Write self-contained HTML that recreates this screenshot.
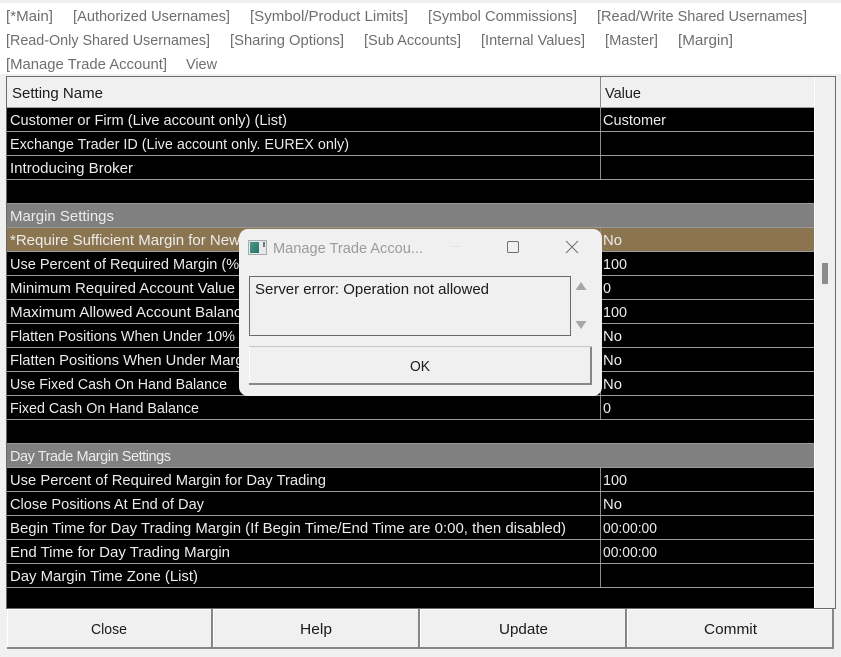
<!DOCTYPE html>
<html><head><meta charset="utf-8"><style>
html,body{margin:0;padding:0;background:#f0f0f0;width:841px;height:657px;overflow:hidden}
svg{display:block}
text{font-family:"Liberation Sans",sans-serif;font-size:14.5px;white-space:pre}
.t text{fill:#6e6e6e}
.r text{fill:#ececec}
.k text{fill:#1a1a1a}
</style></head><body>
<svg width="841" height="657" viewBox="0 0 841 657" xmlns="http://www.w3.org/2000/svg">
<rect width="841" height="657" fill="#f0f0f0"/>
<rect y="3" width="841" height="71" fill="#fff"/>
<g class="t">
<text x="6" y="21" textLength="47" lengthAdjust="spacingAndGlyphs">[*Main]</text>
<text x="73" y="21" textLength="157" lengthAdjust="spacingAndGlyphs">[Authorized Usernames]</text>
<text x="250" y="21" textLength="158" lengthAdjust="spacingAndGlyphs">[Symbol/Product Limits]</text>
<text x="428" y="21" textLength="149" lengthAdjust="spacingAndGlyphs">[Symbol Commissions]</text>
<text x="597" y="21" textLength="210" lengthAdjust="spacingAndGlyphs">[Read/Write Shared Usernames]</text>
<text x="6" y="45" textLength="204" lengthAdjust="spacingAndGlyphs">[Read-Only Shared Usernames]</text>
<text x="230" y="45" textLength="114" lengthAdjust="spacingAndGlyphs">[Sharing Options]</text>
<text x="364" y="45" textLength="97" lengthAdjust="spacingAndGlyphs">[Sub Accounts]</text>
<text x="481" y="45" textLength="104" lengthAdjust="spacingAndGlyphs">[Internal Values]</text>
<text x="605" y="45" textLength="53" lengthAdjust="spacingAndGlyphs">[Master]</text>
<text x="678" y="45" textLength="55" lengthAdjust="spacingAndGlyphs">[Margin]</text>
<text x="6" y="69" textLength="161" lengthAdjust="spacingAndGlyphs">[Manage Trade Account]</text>
<text x="186" y="69" textLength="31" lengthAdjust="spacingAndGlyphs">View</text>
</g>
<!-- table frame -->
<rect x="6.5" y="76.5" width="829" height="532" fill="#f0f0f0" stroke="#6b6b6b"/>
<rect x="814" y="77" width="1" height="531" fill="#fff"/>
<rect x="7" y="108" width="807" height="500" fill="#000"/>
<rect x="600" y="77" width="1" height="31" fill="#8a8a8a"/>
<rect x="7" y="107" width="807" height="1" fill="#a0a0a0"/>
<g class="k">
<text x="12" y="98" textLength="91" lengthAdjust="spacingAndGlyphs">Setting Name</text>
<text x="605" y="98" textLength="36" lengthAdjust="spacingAndGlyphs">Value</text>
</g>
<!-- special rows -->
<rect x="7" y="204" width="807" height="23" fill="#808080"/>
<rect x="7" y="228" width="807" height="23" fill="#8b7550"/>
<rect x="7" y="444" width="807" height="23" fill="#808080"/>
<!-- column separators -->
<g fill="#8a8a8a">
<rect x="600" y="108" width="1" height="72"/>
<rect x="600" y="228" width="1" height="192"/>
<rect x="600" y="468" width="1" height="120"/>
</g>
<!-- row lines -->
<g fill="#9a9a9a">
<rect x="7" y="131" width="807" height="1"/><rect x="7" y="155" width="807" height="1"/>
<rect x="7" y="179" width="807" height="1"/><rect x="7" y="203" width="807" height="1"/>
<rect x="7" y="227" width="807" height="1"/><rect x="7" y="251" width="807" height="1"/>
<rect x="7" y="275" width="807" height="1"/><rect x="7" y="299" width="807" height="1"/>
<rect x="7" y="323" width="807" height="1"/><rect x="7" y="347" width="807" height="1"/>
<rect x="7" y="371" width="807" height="1"/><rect x="7" y="395" width="807" height="1"/>
<rect x="7" y="419" width="807" height="1"/><rect x="7" y="443" width="807" height="1"/>
<rect x="7" y="467" width="807" height="1"/><rect x="7" y="491" width="807" height="1"/>
<rect x="7" y="515" width="807" height="1"/><rect x="7" y="539" width="807" height="1"/>
<rect x="7" y="563" width="807" height="1"/><rect x="7" y="587" width="807" height="1"/>
</g>
<g class="r">
<text x="10" y="125" textLength="277" lengthAdjust="spacingAndGlyphs">Customer or Firm (Live account only) (List)</text>
<text x="10" y="149" textLength="339" lengthAdjust="spacingAndGlyphs">Exchange Trader ID (Live account only. EUREX only)</text>
<text x="10" y="173" textLength="123" lengthAdjust="spacingAndGlyphs">Introducing Broker</text>
<text x="10" y="221" textLength="104" lengthAdjust="spacingAndGlyphs">Margin Settings</text>
<text x="10" y="245" textLength="295" lengthAdjust="spacingAndGlyphs">*Require Sufficient Margin for New Positions</text>
<text x="10" y="269" textLength="234" lengthAdjust="spacingAndGlyphs">Use Percent of Required Margin (%)</text>
<text x="10" y="293" textLength="225" lengthAdjust="spacingAndGlyphs">Minimum Required Account Value</text>
<text x="10" y="317" textLength="240" lengthAdjust="spacingAndGlyphs">Maximum Allowed Account Balance</text>
<text x="10" y="341" textLength="225" lengthAdjust="spacingAndGlyphs">Flatten Positions When Under 10%</text>
<text x="10" y="365" textLength="245" lengthAdjust="spacingAndGlyphs">Flatten Positions When Under Margin</text>
<text x="10" y="389" textLength="217" lengthAdjust="spacingAndGlyphs">Use Fixed Cash On Hand Balance</text>
<text x="10" y="413" textLength="189" lengthAdjust="spacingAndGlyphs">Fixed Cash On Hand Balance</text>
<text x="10" y="461" textLength="161" lengthAdjust="spacing">Day Trade Margin Settings</text>
<text x="10" y="485" textLength="316" lengthAdjust="spacingAndGlyphs">Use Percent of Required Margin for Day Trading</text>
<text x="10" y="509" textLength="194" lengthAdjust="spacingAndGlyphs">Close Positions At End of Day</text>
<text x="10" y="533" textLength="556" lengthAdjust="spacingAndGlyphs">Begin Time for Day Trading Margin (If Begin Time/End Time are 0:00, then disabled)</text>
<text x="10" y="557" textLength="220" lengthAdjust="spacingAndGlyphs">End Time for Day Trading Margin</text>
<text x="10" y="581" textLength="188" lengthAdjust="spacingAndGlyphs">Day Margin Time Zone (List)</text>
<text x="603" y="125" textLength="63" lengthAdjust="spacingAndGlyphs">Customer</text>
<text x="603" y="245" textLength="19" lengthAdjust="spacingAndGlyphs">No</text>
<text x="603" y="269" textLength="24" lengthAdjust="spacingAndGlyphs">100</text>
<text x="603" y="293" textLength="8" lengthAdjust="spacingAndGlyphs">0</text>
<text x="603" y="317" textLength="24" lengthAdjust="spacingAndGlyphs">100</text>
<text x="603" y="341" textLength="19" lengthAdjust="spacingAndGlyphs">No</text>
<text x="603" y="365" textLength="19" lengthAdjust="spacingAndGlyphs">No</text>
<text x="603" y="389" textLength="19" lengthAdjust="spacingAndGlyphs">No</text>
<text x="603" y="413" textLength="8" lengthAdjust="spacingAndGlyphs">0</text>
<text x="603" y="485" textLength="24" lengthAdjust="spacingAndGlyphs">100</text>
<text x="603" y="509" textLength="19" lengthAdjust="spacingAndGlyphs">No</text>
<text x="603" y="533" textLength="54" lengthAdjust="spacingAndGlyphs">00:00:00</text>
<text x="603" y="557" textLength="54" lengthAdjust="spacingAndGlyphs">00:00:00</text>
</g>
<!-- scrollbar thumb -->
<rect x="822" y="263" width="6" height="21" fill="#8c8c8c"/>
<!-- bottom buttons -->
<g>
<rect x="7" y="609" width="206" height="40" fill="#868686"/><rect x="7" y="609" width="204" height="38" fill="#fff"/><rect x="8" y="610" width="203" height="37" fill="#f0f0f0"/>
<rect x="213" y="609" width="207" height="40" fill="#868686"/><rect x="213" y="609" width="205" height="38" fill="#fff"/><rect x="214" y="610" width="204" height="37" fill="#f0f0f0"/>
<rect x="420" y="609" width="207" height="40" fill="#868686"/><rect x="420" y="609" width="205" height="38" fill="#fff"/><rect x="421" y="610" width="204" height="37" fill="#f0f0f0"/>
<rect x="627" y="609" width="207" height="40" fill="#868686"/><rect x="627" y="609" width="205" height="38" fill="#fff"/><rect x="628" y="610" width="204" height="37" fill="#f0f0f0"/>
</g>
<g class="k">
<text x="91" y="634" textLength="36" lengthAdjust="spacingAndGlyphs">Close</text>
<text x="300" y="634" textLength="32" lengthAdjust="spacingAndGlyphs">Help</text>
<text x="499" y="634" textLength="49" lengthAdjust="spacingAndGlyphs">Update</text>
<text x="704" y="634" textLength="53" lengthAdjust="spacingAndGlyphs">Commit</text>
</g>
<!-- dialog -->
<rect x="239" y="229" width="363" height="167" rx="9" fill="#f0f0f0"/>
<defs><linearGradient id="g" x1="0" y1="0" x2="1" y2="1"><stop offset="0" stop-color="#4a9a8c"/><stop offset="1" stop-color="#2a6f66"/></linearGradient></defs>
<rect x="248.5" y="240.5" width="18" height="14" fill="#e6eaea" stroke="#a4aaaa"/>
<rect x="250" y="242" width="9" height="11" fill="url(#g)"/>
<rect x="263" y="242" width="2" height="5" fill="#6a7a80"/>
<text x="273" y="253" textLength="150" lengthAdjust="spacingAndGlyphs" fill="#9b9b9b">Manage Trade Accou...</text>
<rect x="450" y="246" width="11" height="1" fill="#e4e4e4"/>
<rect x="507.5" y="241.5" width="11" height="11" rx="1.5" fill="none" stroke="#707070"/>
<path d="M566 241L578 253M578 241L566 253" stroke="#707070" stroke-width="1" fill="none"/>
<rect x="249.5" y="276.5" width="321" height="59" fill="#f0f0f0" stroke="#6a6a6a"/>
<text x="255" y="294" textLength="234" lengthAdjust="spacingAndGlyphs" fill="#1a1a1a">Server error: Operation not allowed</text>
<path d="M581 282L586.5 290H575.5Z" fill="#a6a6a6"/>
<path d="M581 329L586.5 321H575.5Z" fill="#a6a6a6"/>
<rect x="249" y="346" width="343" height="39" fill="#868686"/><rect x="249" y="346" width="341" height="37" fill="#fff"/><rect x="250" y="347" width="340" height="36" fill="#f0f0f0"/>
<rect x="249" y="346" width="343" height="1" fill="#c8c8c8"/>
<text x="410" y="371" textLength="20" lengthAdjust="spacingAndGlyphs" fill="#1a1a1a">OK</text>
</svg>
</body></html>
